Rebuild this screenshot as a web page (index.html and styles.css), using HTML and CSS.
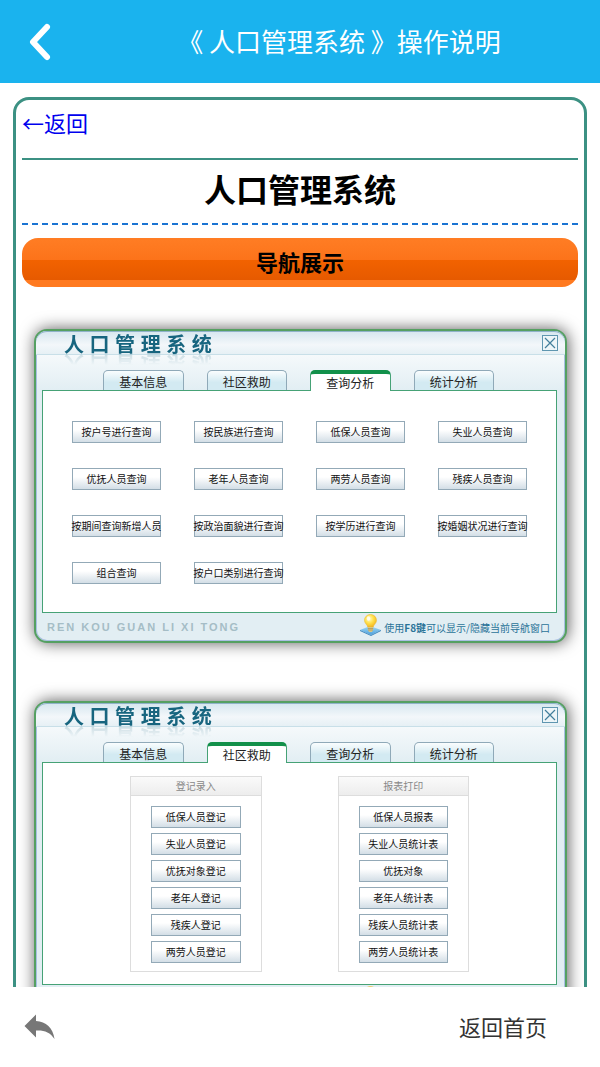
FILE: index.html
```
<!DOCTYPE html>
<html lang="zh-CN">
<head>
    <meta charset="UTF-8">
    <meta name="viewport" content="width=device-width, initial-scale=1.0">
    <title>人口管理系统</title>
    <link rel="stylesheet" href="styles.css">
</head>
<body>
    <!-- 图标 -->
    <svg class="icon-defs" aria-hidden="true">
        <defs>
            <radialGradient id="bulbFill" cx="0.4" cy="0.35" r="0.7">
                <stop offset="0" stop-color="#fffbd0"/>
                <stop offset="0.5" stop-color="#ffe04a"/>
                <stop offset="1" stop-color="#f2b01c"/>
            </radialGradient>
            <linearGradient id="baseFill" x1="0" y1="0" x2="0" y2="1">
                <stop offset="0" stop-color="#a5dcf8"/>
                <stop offset="1" stop-color="#4a9fdc"/>
            </linearGradient>
        </defs>
        <symbol id="bulb" viewBox="0 0 21 22">
            <path d="M0 16 L10 12 L21 16 L11 21 Z" fill="url(#baseFill)"/>
            <path d="M0 16 L11 21 L21 16 L21 17 L11 22 L0 17 Z" fill="#3b86bd"/>
            <path d="M10.500 0.500 C6.800 0.500 4.500 3.200 4.500 6.300 C4.500 9.500 7.300 10.500 7.700 13 L13.300 13 C13.700 10.500 16.500 9.500 16.500 6.300 C16.500 3.200 14.200 0.500 10.500 0.500 Z" fill="url(#bulbFill)" stroke="#e9b52c" stroke-width="0.500"/>
            <path d="M7.800 13 H13.200 V16 L11.800 18 H9.200 L7.800 16 Z" fill="#d9c784"/>
            <path d="M7.800 14.500 H13.200 M8 16 H13" stroke="#9a8a55" stroke-width="0.600"/>
            <ellipse cx="8.500" cy="4.500" rx="1.700" ry="2.200" fill="#fff" opacity="0.800"/>
        </symbol>
        <symbol id="close" viewBox="0 0 14 14">
            <path d="M2 2 L12 12 M12 2 L2 12" stroke="#427e9b" stroke-width="1.200" fill="none"/>
        </symbol>
    </svg>

    <header class="top-bar">
        <button class="back-btn" type="button" aria-label="返回上一页">
            <svg width="24" height="40" viewBox="0 0 24 40">
                <path d="M19 5 L5 20 L19 35" fill="none" stroke="#fff" stroke-width="6" stroke-linecap="round" stroke-linejoin="round"/>
            </svg>
        </button>
        <div class="top-title">《 人口管理系统 》操作说明</div>
    </header>

    <main class="content">
        <article class="doc">
            <a class="doc-back" href="#">←返回</a>
            <h1 class="doc-title">人口管理系统</h1>
            <h2 class="doc-nav">导航展示</h2>

            <!-- 查询分析 -->
            <section class="window">
                <div class="window-head">
                    <span class="window-title">人 口 管 理 系 统</span>
                    <button class="window-close" type="button" aria-label="关闭"><svg><use href="#close"/></svg></button>
                </div>
                <nav class="tabs">
                    <button class="tab" type="button">基本信息</button>
                    <button class="tab" type="button">社区救助</button>
                    <button class="tab active" type="button">查询分析</button>
                    <button class="tab" type="button">统计分析</button>
                </nav>
                <div class="panel query-grid">
                    <button class="btn" type="button">按户号进行查询</button>
                    <button class="btn" type="button">按民族进行查询</button>
                    <button class="btn" type="button">低保人员查询</button>
                    <button class="btn" type="button">失业人员查询</button>
                    <button class="btn" type="button">优抚人员查询</button>
                    <button class="btn" type="button">老年人员查询</button>
                    <button class="btn" type="button">两劳人员查询</button>
                    <button class="btn" type="button">残疾人员查询</button>
                    <button class="btn" type="button">按期间查询新增人员</button>
                    <button class="btn" type="button">按政治面貌进行查询</button>
                    <button class="btn" type="button">按学历进行查询</button>
                    <button class="btn" type="button">按婚姻状况进行查询</button>
                    <button class="btn" type="button">组合查询</button>
                    <button class="btn" type="button">按户口类别进行查询</button>
                </div>
                <div class="window-foot">
                    <span class="pinyin">REN KOU GUAN LI XI TONG</span>
                    <span class="hint"><svg class="bulb"><use href="#bulb"/></svg><span>使用<b>F8键</b>可以显示/隐藏当前导航窗口</span></span>
                </div>
            </section>

            <!-- 社区救助 -->
            <section class="window">
                <div class="window-head">
                    <span class="window-title">人 口 管 理 系 统</span>
                    <button class="window-close" type="button" aria-label="关闭"><svg><use href="#close"/></svg></button>
                </div>
                <nav class="tabs">
                    <button class="tab" type="button">基本信息</button>
                    <button class="tab active" type="button">社区救助</button>
                    <button class="tab" type="button">查询分析</button>
                    <button class="tab" type="button">统计分析</button>
                </nav>
                <div class="panel group-grid">
                    <div class="group">
                        <h3 class="group-title">登记录入</h3>
                        <button class="btn" type="button">低保人员登记</button>
                        <button class="btn" type="button">失业人员登记</button>
                        <button class="btn" type="button">优抚对象登记</button>
                        <button class="btn" type="button">老年人登记</button>
                        <button class="btn" type="button">残疾人登记</button>
                        <button class="btn" type="button">两劳人员登记</button>
                    </div>
                    <div class="group">
                        <h3 class="group-title">报表打印</h3>
                        <button class="btn" type="button">低保人员报表</button>
                        <button class="btn" type="button">失业人员统计表</button>
                        <button class="btn" type="button">优抚对象</button>
                        <button class="btn" type="button">老年人统计表</button>
                        <button class="btn" type="button">残疾人员统计表</button>
                        <button class="btn" type="button">两劳人员统计表</button>
                    </div>
                </div>
                <div class="window-foot">
                    <span class="pinyin">REN KOU GUAN LI XI TONG</span>
                    <span class="hint"><svg class="bulb"><use href="#bulb"/></svg><span>使用<b>F8键</b>可以显示/隐藏当前导航窗口</span></span>
                </div>
            </section>
        </article>
    </main>

    <footer class="bottom-bar">
        <button class="reply-btn" type="button" aria-label="返回">
            <svg width="32" height="26" viewBox="0 0 32 26">
                <path d="M0.500 12 L12 0.500 V7 C22 7.500 29 14 30.500 25 C26 18 20 16 12 16.500 V23.500 Z" fill="#777"/>
            </svg>
        </button>
        <a class="home-link" href="#">返回首页</a>
    </footer>
</body>
</html>
```
FILE: styles.css
```
* {
    margin: 0;
    padding: 0;
    box-sizing: border-box;
}

body {
    height: 100vh;
    display: flex;
    flex-direction: column;
    background: #fff;
    color: #000;
    font-family: "Noto Sans CJK SC", sans-serif;
}

button {
    font-family: inherit;
    border: none;
    background: none;
    cursor: pointer;
}

a {
    text-decoration: none;
}

svg {
    display: block;
}

.icon-defs {
    position: absolute;
    width: 0;
    height: 0;
}

/* 顶部栏 */
.top-bar {
    flex: none;
    height: 83px;
    display: flex;
    align-items: center;
    background: #1ab3ee;
    color: #fff;
}

.back-btn {
    width: 78px;
    padding-left: 28px;
}

.top-title {
    flex: 1;
    padding-bottom: 3px;
    text-align: center;
    font-size: 26px;
}

/* 正文 */
.content {
    flex: 1;
    min-height: 0;
    overflow-y: auto;
    scrollbar-width: none;
    padding: 14px 13px 0;
}

.doc {
    border: 3px solid #3c9183;
    border-radius: 16px;
    padding: 6px 6px 40px;
}

.doc-back {
    display: block;
    margin-bottom: 20px;
    line-height: 32px;
    font-size: 22px;
    color: #0000ee;
}

.doc-title {
    border-top: 2px solid #3c9183;
    padding-bottom: 8px;
    line-height: 57px;
    font-size: 32px;
    text-align: center;
    background: repeating-linear-gradient(90deg, #1a73d2 0 6px, transparent 6px 10px) left bottom / 100% 2px no-repeat;
}

.doc-nav {
    margin-top: 13px;
    padding-bottom: 2px;
    border-radius: 16px;
    line-height: 47px;
    font-size: 22px;
    text-align: center;
    background: linear-gradient(#ff7d24, #fc731a 45%, #f26200 45%, #e65a00 86%, #ff7a20 86%);
}

/* 导航窗口 */
.window {
    margin: 42px 11px 58px 12px;
    border: 2px solid #55a062;
    border-radius: 13px;
    background: #e2eef3;
    box-shadow: 1px 0 16px rgba(0, 0, 0, 0.65), inset 0 0 0 1px #a9bfe2;
}

.window-head {
    height: 24px;
    display: flex;
    align-items: center;
    justify-content: space-between;
    padding: 0 7px 0 28px;
    border-bottom: 1px solid #c8dfe8;
    border-radius: 11px 11px 0 0;
    background: linear-gradient(#d5e6ef, #f3f7fa 60%, #e6f0f5);
    box-shadow: inset 0 1px 0 #8fb2c9;
}

.window-title {
    padding-top: 4px;
    font-family: "Liberation Sans", "Noto Sans CJK SC", sans-serif;
    font-size: 20px;
    font-weight: bold;
    line-height: 24px;
    color: #17657f;
    -webkit-box-reflect: below -6px linear-gradient(transparent 50%, rgba(0, 0, 0, 0.25));
}

.window-close {
    width: 16px;
    height: 16px;
    border: 1px solid #5f96b0;
    background: #edf5f8;
}

.window-close svg {
    width: 14px;
    height: 14px;
}

.tabs {
    display: grid;
    grid-template-columns: repeat(4, 1fr);
    gap: 23px;
    padding: 15px 70px 0 66px;
    background: linear-gradient(#f5f9fb, #e2eef3);
    margin: 0 1px;
}

.tab {
    height: 20px;
    border: 1px solid #8fa9b8;
    border-bottom: none;
    border-radius: 5px 5px 0 0;
    background: linear-gradient(#fafdfe, #d3eaf2 60%);
    font-size: 12px;
    line-height: 22px;
    color: #222;
}

/* 选中的标签盖住面板的上边框 */
.tab.active {
    height: 21px;
    margin-bottom: -1px;
    border: 1px solid #46a276;
    border-top: 4px solid #12904a;
    border-bottom: none;
    background: #fff;
    line-height: 16px;
    position: relative;
}

.panel {
    height: 223px;
    margin: 0 8px 0 6px;
    border: 1px solid #46a276;
    background: #fff;
}

.query-grid {
    display: grid;
    grid-template-columns: repeat(4, minmax(0, 1fr));
    grid-auto-rows: 22px;
    gap: 25px 33px;
    padding: 30px 29px;
}

.group-grid {
    display: grid;
    grid-template-columns: 1fr 1fr;
    gap: 76px;
    padding: 13px 87px 12px;
}

.group {
    display: flex;
    flex-direction: column;
    gap: 5px;
    border: 1px solid #ddd;
}

.group-title {
    margin-bottom: 5px;
    border-bottom: 1px solid #ddd;
    background: linear-gradient(#fafafa, #ededed);
    font-size: 10px;
    font-weight: normal;
    line-height: 18px;
    text-align: center;
    color: #888;
}

.group .btn {
    margin: 0 20px;
}

.btn {
    height: 22px;
    display: flex;
    align-items: center;
    justify-content: center;
    padding-bottom: 2px;
    border: 1px solid #93a9b7;
    background: linear-gradient(#fff 40%, #d3dee6);
    font-size: 10px;
    white-space: nowrap;
    color: #111;
}

.window-foot {
    height: 28px;
    display: flex;
    align-items: center;
    justify-content: space-between;
    padding: 0 15px 0 11px;
}

.pinyin {
    font-family: "Liberation Sans", sans-serif;
    font-size: 11px;
    font-weight: bold;
    letter-spacing: 2px;
    color: #a5bdc6;
}

.hint {
    display: flex;
    align-items: center;
    gap: 3px;
    font-size: 10px;
    color: #2a7398;
}

.bulb {
    width: 21px;
    height: 22px;
    margin-bottom: 4px;
}

/* 底部栏 */
.bottom-bar {
    flex: none;
    height: 80px;
    display: flex;
    align-items: center;
    justify-content: space-between;
    padding: 0 53px 0 24px;
    background: #fff;
}

.home-link {
    padding-bottom: 3px;
    font-size: 22px;
    color: #333;
}
```
